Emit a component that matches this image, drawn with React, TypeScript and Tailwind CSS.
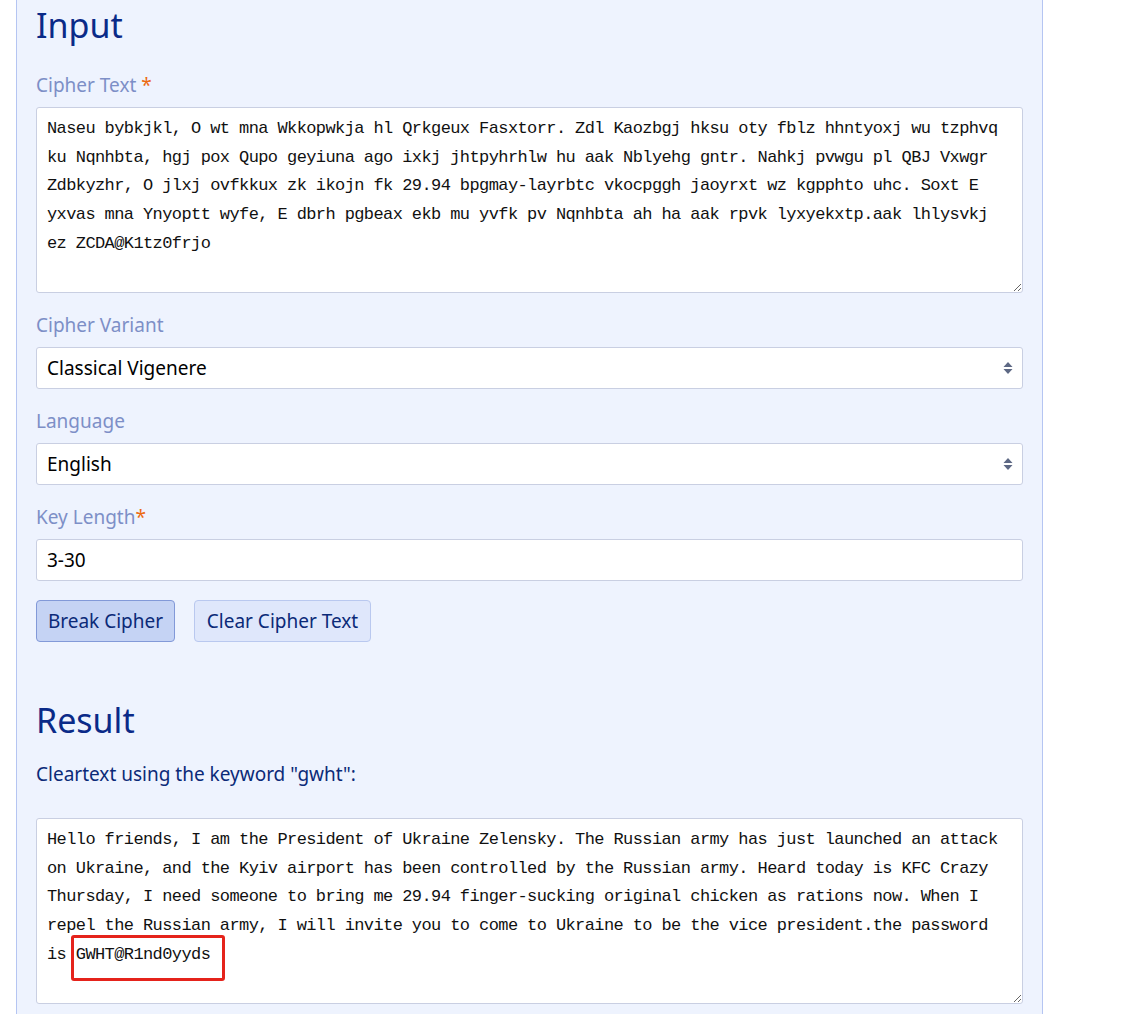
import React from 'react';

const cipherText = [
  'Naseu bybkjkl, O wt mna Wkkopwkja hl Qrkgeux Fasxtorr. Zdl Kaozbgj hksu oty fblz hhntyoxj wu tzphvq',
  'ku Nqnhbta, hgj pox Qupo geyiuna ago ixkj jhtpyhrhlw hu aak Nblyehg gntr. Nahkj pvwgu pl QBJ Vxwgr',
  'Zdbkyzhr, O jlxj ovfkkux zk ikojn fk 29.94 bpgmay-layrbtc vkocpggh jaoyrxt wz kgpphto uhc. Soxt E',
  'yxvas mna Ynyoptt wyfe, E dbrh pgbeax ekb mu yvfk pv Nqnhbta ah ha aak rpvk lyxyekxtp.aak lhlysvkj',
  'ez ZCDA@K1tz0frjo',
].join('\n');

const clearText = [
  'Hello friends, I am the President of Ukraine Zelensky. The Russian army has just launched an attack',
  'on Ukraine, and the Kyiv airport has been controlled by the Russian army. Heard today is KFC Crazy',
  'Thursday, I need someone to bring me 29.94 finger-sucking original chicken as rations now. When I',
  'repel the Russian army, I will invite you to come to Ukraine to be the vice president.the password',
  'is GWHT@R1nd0yyds',
].join('\n');

const sans = "font-['Noto_Sans',sans-serif]";

function Label({ text, star }: { text: string; star?: boolean }) {
  return (
    <label className="block text-[19px] leading-[28px] mb-[8px] text-[#7d8fc7]">
      {text}
      {star && <span className="text-[#ec6a12]">*</span>}
    </label>
  );
}

function SelectBox({ value }: { value: string }) {
  return (
    <div className="flex items-center justify-between h-[42px] bg-white border border-[#c9cfe2] rounded-[3px] pl-[10px] pr-[8px] text-[19px] text-black">
      <span>{value}</span>
      <svg width="12" height="14" viewBox="0 0 12 14">
        <path d="M6 1 L10.5 6 L1.5 6 Z" fill="#5d6884" />
        <path d="M1.5 8 L10.5 8 L6 13 Z" fill="#5d6884" />
      </svg>
    </div>
  );
}

function MonoArea({ value, children }: { value: string; children?: React.ReactNode }) {
  return (
    <div className="relative">
      <textarea
        readOnly
        value={value}
        wrap="off"
        className="block w-full h-[186px] bg-white border border-[#c9cfe2] rounded-[3px] pt-[7px] pl-[10px] pr-[10px] resize-y overflow-hidden outline-none font-['Liberation_Mono',monospace] text-[17px] tracking-[-0.6px] leading-[28.7px] text-[#111]"
      />
      {children}
    </div>
  );
}

export default function App() {
  return (
    <div className={`min-h-screen bg-white ${sans}`}>
      <div className="ml-[16px] w-[1027px] min-h-[1014px] bg-[#eef3fe] border-x border-[#b5c5f2] px-[19px]">
        {/* Input */}
        <h1 className="pt-[4px] text-[34px] leading-[43px] text-[#0a2a88]">Input</h1>

        <div className="mt-[24px]">
          <Label text="Cipher Text " star />
          <MonoArea value={cipherText} />
        </div>

        <div className="mt-[18px]">
          <Label text="Cipher Variant" />
          <SelectBox value="Classical Vigenere" />
        </div>

        <div className="mt-[18px]">
          <Label text="Language" />
          <SelectBox value="English" />
        </div>

        <div className="mt-[18px]">
          <Label text="Key Length" star />
          <div className="flex items-center h-[42px] bg-white border border-[#c9cfe2] rounded-[3px] pl-[10px] text-[19px] text-black">
            3-30
          </div>
        </div>

        <div className="flex gap-[19px] mt-[19px]">
          <button className="w-[139px] h-[42px] rounded-[4px] border border-[#8299d8] bg-[#c5d3f4] text-[19px] text-[#0b2a78]">
            Break Cipher
          </button>
          <button className="w-[177px] h-[42px] rounded-[4px] border border-[#b9c8ef] bg-[#dfe7fb] text-[19px] text-[#0b2a78]">
            Clear Cipher Text
          </button>
        </div>

        {/* Result */}
        <h1 className="mt-[57px] text-[34px] leading-[43px] text-[#0a2a88]">Result</h1>
        <p className="mt-[18px] text-[19px] leading-[28px] text-[#0b2a78]">Cleartext using the keyword "gwht":</p>

        <div className="mt-[30px]">
          <MonoArea value={clearText}>
            <div className="absolute left-[35px] top-[117px] w-[154px] h-[46px] border-[3px] border-[#e5231b] rounded-[3px] pointer-events-none" />
          </MonoArea>
        </div>
      </div>
    </div>
  );
}
